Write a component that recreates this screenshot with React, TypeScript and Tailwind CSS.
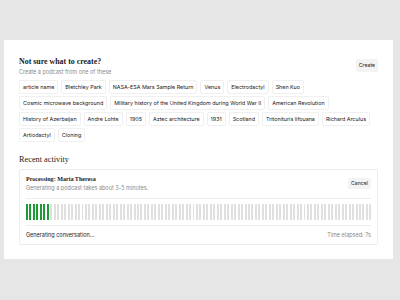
const topics = [
  'article name',
  'Bletchley Park',
  'NASA-ESA Mars Sample Return',
  'Venus',
  'Electrodactyl',
  'Shen Kuo',
  'Cosmic microwave background',
  'Military history of the United Kingdom during World War II',
  'American Revolution',
  'History of Azerbaijan',
  'Andre Lohte',
  '1905',
  'Aztec architecture',
  '1931',
  'Scotland',
  'Tritonituris lifouana',
  'Richard Arculus',
  'Artiodactyl',
  'Cloning',
];

const serif = "font-['Liberation_Serif',serif]";

export default function App() {
  const bars = Array.from({ length: 100 }, (_, i) => i < 7);

  return (
    <div className="min-h-screen bg-[#e6e6e6] pt-[40px] font-['Inter',sans-serif]">
      <div className="ml-[4px] w-[389px] bg-white px-[15px] pt-[16px] pb-[14px]">
        <div className="flex items-start justify-between">
          <div>
            <h1 className={`${serif} text-[7.9px] font-bold leading-[11px] text-[#1a1a1a]`}>
              Not sure what to create?
            </h1>
            <p className="mt-[1px] text-[5.5px] leading-[8px] text-[#8a8a8a]">
              Create a podcast from one of these
            </p>
          </div>
          <button className="mt-[3px] h-[13px] w-[22px] rounded-[2px] bg-[#f3f3f3] text-[5.2px] text-[#222]">
            Create
          </button>
        </div>

        <div className="mt-[4px] flex flex-wrap gap-x-[3px] gap-y-[2px]">
          {topics.map((t) => (
            <span
              key={t}
              className="flex h-[14px] items-center rounded-[2px] border border-[#f0f0f0] px-[3px] text-[5.4px] text-[#1a1a1a]"
            >
              {t}
            </span>
          ))}
        </div>

        <h2 className={`${serif} mt-[12px] text-[8.3px] leading-[11px] text-[#1a1a1a]`}>
          Recent activity
        </h2>

        <div className="mt-[4px] rounded-[2px] border border-[#ededed] px-[6px] pt-[5px]">
          <div className="flex items-start justify-between">
            <div>
              <div className={`${serif} text-[6.1px] font-bold leading-[9px] text-[#222]`}>
                Processing: Maria Theresa
              </div>
              <div className="text-[5.5px] leading-[9px] text-[#8a8a8a]">
                Generating a podcast takes about 3-5 minutes.
              </div>
            </div>
            <button className="mt-[3px] h-[11px] w-[23px] rounded-[2px] bg-[#f3f3f3] text-[5.2px] text-[#222]">
              Cancel
            </button>
          </div>

          <div className="mt-[5px] border-t border-[#ececec] py-[5px]">
            <div className="flex h-[16px] gap-[1.5px]">
              {bars.map((on, i) => (
                <div key={i} className={`flex-1 ${on ? 'bg-[#1c9c34]' : 'bg-[#e0e0e0]'}`} />
              ))}
            </div>
          </div>

          <div className="flex h-[19px] items-center justify-between border-t border-[#ececec] text-[5.5px]">
            <span className="text-[#222]">Generating conversation...</span>
            <span className="text-[#8a8a8a]">Time elapsed: 7s</span>
          </div>
        </div>
      </div>
    </div>
  );
}
